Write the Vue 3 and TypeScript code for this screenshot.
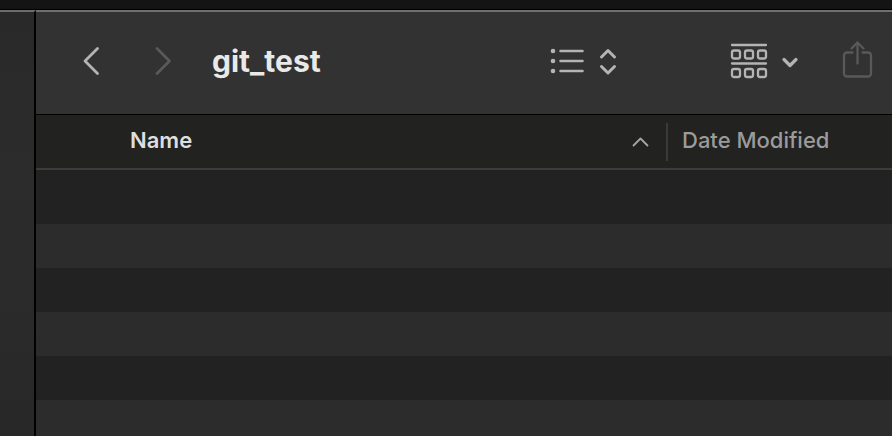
<script setup lang="ts">
import { ref } from 'vue'

const folder = ref('git_test')
const emptyRows = [1, 2, 3, 4, 5, 6]
const groupCells = [3, 16, 29]
const ascending = ref(true)
</script>

<template>
  <div class="desktop">
    <div class="window">
      <aside class="sidebar" aria-label="Sidebar"></aside>
      <main class="browser">
        <header class="toolbar">
          <button class="tool back" type="button" aria-label="Back">
            <svg width="20" height="32" viewBox="0 0 20 32">
              <path d="M16.5 3.5 4 16l12.500 12.500" stroke-width="2.800" />
            </svg>
          </button>
          <button class="tool forward" type="button" aria-label="Forward" disabled>
            <svg width="20" height="32" viewBox="0 0 20 32">
              <path d="M4 3.500 16.500 16 4 28.500" stroke-width="2.800" />
            </svg>
          </button>
          <h1 class="title">{{ folder }}</h1>
          <button class="tool view" type="button" aria-label="View as list">
            <svg width="70" height="40" viewBox="0 0 70 40">
              <g class="dots">
                <circle cx="4" cy="10" r="2.3" />
                <circle cx="4" cy="20" r="2.3" />
                <circle cx="4" cy="30" r="2.3" />
              </g>
              <path d="M11.5 10h22M11.5 20h22M11.5 30h22" stroke-width="2.5" />
              <path d="m52.5 16 6.5-6.500 6.500 6.500M52.500 25.500 59 32l6.500-6.500" stroke-width="3" />
            </svg>
          </button>
          <button class="tool group" type="button" aria-label="Group items">
            <svg width="70" height="40" viewBox="0 0 70 40">
              <path d="M3 4h34M3 22.500h34" stroke-width="2.300" />
              <g stroke-width="2.300">
                <rect v-for="x in groupCells" :key="x" :x="x" y="9.500" width="8" height="8" rx="2" />
                <rect v-for="x in groupCells" :key="x + 50" :x="x" y="28" width="8" height="8" rx="2" />
              </g>
              <path d="m55 18.500 6 6 6-6" stroke-width="3.200" />
            </svg>
          </button>
          <button class="tool share" type="button" aria-label="Share" disabled>
            <svg width="34" height="42" viewBox="0 0 34 42">
              <path d="M12.500 12.500H7a3 3 0 0 0-3 3v18a3 3 0 0 0 3 3h21a3 3 0 0 0 3-3v-18a3 3 0 0 0-3-3H22.500M17.500 23.500V2.500M11.500 8.500l6-6 6 6" stroke-width="2.300" />
            </svg>
          </button>
        </header>
        <table class="files">
          <thead>
            <tr>
              <th class="name" scope="col">
                <button class="sort" type="button" @click="ascending = !ascending">
                  <span>Name</span>
                  <svg :class="{ flipped: !ascending }" width="18" height="12" viewBox="0 0 18 12">
                    <path d="m2.500 9.500 7-7 7 7" stroke-width="1.800" />
                  </svg>
                </button>
              </th>
              <th class="date" scope="col">
                <button class="sort" type="button"><span>Date Modified</span></button>
              </th>
            </tr>
          </thead>
          <tbody>
            <tr v-for="row in emptyRows" :key="row">
              <td></td>
              <td></td>
            </tr>
          </tbody>
        </table>
      </main>
    </div>
  </div>
</template>

<style>
body {
  margin: 0;
  background: #141414;
}
</style>

<style scoped>
.desktop {
  height: 100vh;
  box-sizing: border-box;
  padding-top: 9px;
  overflow: hidden;
  background: #141414;
  font-family: Inter, 'Liberation Sans', sans-serif;
}

.window {
  display: flex;
  height: 100%;
  box-sizing: border-box;
  border-top: 1px solid #000;
}

.sidebar {
  flex: 0 0 34px;
  border-top: 2px solid #6c6c6c;
  border-right: 2px solid #000;
  background: linear-gradient(#292929, #2b2c2b 38%, #2b2b2b 60%, #282828);
}

.browser {
  flex: 1;
  min-width: 0;
  background: #222;
}

.toolbar {
  display: flex;
  align-items: center;
  height: 98px;
  padding: 0 18px 4px 45px;
  border-top: 2px solid #707070;
  border-bottom: 1px solid #000;
  background: #323232;
}

.tool {
  display: flex;
  padding: 0;
  border: 0;
  background: none;
  color: #b4b4b4;
}

.tool:disabled {
  color: #595959;
}

svg {
  display: block;
  fill: none;
  stroke: currentColor;
  stroke-linecap: round;
  stroke-linejoin: round;
}

.dots {
  fill: currentColor;
  stroke: none;
}

.forward {
  margin-left: 52px;
}

.title {
  flex: 1;
  margin: 0 0 0 39px;
  color: #e9e9e9;
  font-size: 30px;
  font-weight: 700;
  line-height: 40px;
}

.group {
  margin-left: 110px;
}

.share {
  margin-left: 41px;
}

.files {
  width: 100%;
  table-layout: fixed;
  border-collapse: separate;
  border-spacing: 0;
}

.files th {
  height: 55px;
  box-sizing: border-box;
  padding: 0;
  border-bottom: 2px solid #3c3c3b;
  background: #222220;
}

.date {
  width: 226px;
}

.sort {
  display: flex;
  align-items: center;
  justify-content: space-between;
  width: 100%;
  height: 38px;
  box-sizing: border-box;
  padding: 0;
  border: 0;
  background: none;
  color: #9b9b9b;
  font: 500 22px/34px Inter, 'Liberation Sans', sans-serif;
}

.sort span {
  padding-bottom: 4px;
}

.name .sort {
  padding: 0 17px 0 94px;
  color: #dedede;
  font-weight: 600;
}

.name svg {
  color: #a5a5a5;
}

.flipped {
  transform: rotate(180deg);
}

.date .sort {
  padding-left: 14px;
  border-left: 2px solid #3a3a3a;
}

.files td {
  height: 44px;
  padding: 0;
  background: #222;
}

.files tbody tr:first-child td {
  height: 54px;
}

.files tbody tr:nth-child(even) td {
  background: #2c2c2c;
}
</style>
